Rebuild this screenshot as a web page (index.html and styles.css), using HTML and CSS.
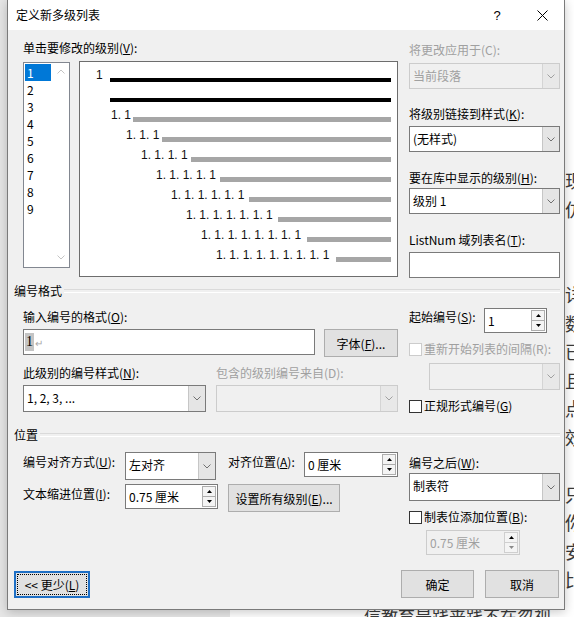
FILE: index.html
```html
<!DOCTYPE html>
<html lang="zh-CN">
<head>
<meta charset="utf-8">
<title>定义新多级列表</title>
<link rel="stylesheet" href="styles.css">
</head>
<body>
<div class="backdrop">
  <div class="gutter"></div>
  <div class="page">
    <div class="doc">
      <p>现</p>
      <p>仿</p>
      <p></p>
      <p></p>
      <p>详</p>
      <p>数</p>
      <p>已</p>
      <p>且</p>
      <p>点</p>
      <p>效</p>
      <p></p>
      <p>只</p>
      <p>你</p>
      <p>安</p>
      <p>比</p>
      <p class="last">信教育是践来践不在忽视。</p>
    </div>
  </div>
</div>

<div class="dialog">
  <div class="titlebar">
    <span class="title">定义新多级列表</span>
    <span class="tb-btn help">?</span>
    <span class="tb-btn close">
      <svg width="11" height="11" viewBox="0 0 11 11"><path d="M0.5 0.5 L10.5 10.5 M10.5 0.5 L0.5 10.5" stroke="#000" stroke-width="1" fill="none"/></svg>
    </span>
  </div>

  <div class="body">
    <div class="sec-top">
      <div class="levels-col">
        <div class="label">单击要修改的级别(<u>V</u>):</div>
        <div class="levels-row">
          <div class="level-list">
            <ul class="items">
              <li class="sel">1</li>
              <li>2</li>
              <li>3</li>
              <li>4</li>
              <li>5</li>
              <li>6</li>
              <li>7</li>
              <li>8</li>
              <li>9</li>
            </ul>
            <div class="vscroll">
              <svg width="8" height="5" viewBox="0 0 8 5"><polyline points="0.5,4.5 4,1 7.5,4.5" fill="none" stroke="#c4c4c4" stroke-width="1"/></svg>
              <svg width="8" height="5" viewBox="0 0 8 5"><polyline points="0.5,0.5 4,4 7.5,0.5" fill="none" stroke="#c4c4c4" stroke-width="1"/></svg>
            </div>
          </div>
          <div class="preview">
            <div class="prow lv1"><span class="num">1</span><span class="bar black"></span></div>
            <div class="prow cont"><span class="bar black"></span></div>
            <div class="prow lv2"><span class="num">1. 1</span><span class="bar"></span></div>
            <div class="prow lv3"><span class="num">1. 1. 1</span><span class="bar"></span></div>
            <div class="prow lv4"><span class="num">1. 1. 1. 1</span><span class="bar"></span></div>
            <div class="prow lv5"><span class="num">1. 1. 1. 1. 1</span><span class="bar"></span></div>
            <div class="prow lv6"><span class="num">1. 1. 1. 1. 1. 1</span><span class="bar"></span></div>
            <div class="prow lv7"><span class="num">1. 1. 1. 1. 1. 1. 1</span><span class="bar"></span></div>
            <div class="prow lv8"><span class="num">1. 1. 1. 1. 1. 1. 1. 1</span><span class="bar"></span></div>
            <div class="prow lv9"><span class="num">1. 1. 1. 1. 1. 1. 1. 1. 1</span><span class="bar"></span></div>
          </div>
        </div>
      </div>

      <div class="side side-top">
        <div class="label disabled l-apply">将更改应用于(C):</div>
        <div class="combo disabled c-apply"><span class="val">当前段落</span><span class="arrow"><svg width="8" height="5" viewBox="0 0 8 5"><polyline points="0.5,0.5 4,4 7.5,0.5" fill="none" stroke="#a0a0a0"/></svg></span></div>
        <div class="label l-link">将级别链接到样式(<u>K</u>):</div>
        <div class="combo c-link"><span class="val">(无样式)</span><span class="arrow"><svg width="8" height="5" viewBox="0 0 8 5"><polyline points="0.5,0.5 4,4 7.5,0.5" fill="none" stroke="#707070"/></svg></span></div>
        <div class="label l-gallery">要在库中显示的级别(<u>H</u>):</div>
        <div class="combo c-gallery"><span class="val">级别 1</span><span class="arrow"><svg width="8" height="5" viewBox="0 0 8 5"><polyline points="0.5,0.5 4,4 7.5,0.5" fill="none" stroke="#707070"/></svg></span></div>
        <div class="label l-listnum">ListNum 域列表名(<u>T</u>):</div>
        <div class="textbox t-listnum"></div>
      </div>
    </div>

    <div class="group-head gh-format"><span>编号格式</span></div>

    <div class="sec sec-b">
      <div class="main">
        <div class="label l-fmt">输入编号的格式(<u>O</u>):</div>
        <div class="row r-fmt">
          <div class="textbox t-fmt"><span class="sel-num">1</span><span class="ret">↵</span></div>
          <div class="btn b-font">字体(<u>F</u>)...</div>
        </div>
        <div class="row r-labels">
          <div class="label l-style">此级别的编号样式(<u>N</u>):</div>
          <div class="label disabled">包含的级别编号来自(D):</div>
        </div>
        <div class="row r-combos">
          <div class="combo c-style"><span class="val">1, 2, 3, ...</span><span class="arrow"><svg width="8" height="5" viewBox="0 0 8 5"><polyline points="0.5,0.5 4,4 7.5,0.5" fill="none" stroke="#707070"/></svg></span></div>
          <div class="combo disabled c-include"><span class="val"></span><span class="arrow"><svg width="8" height="5" viewBox="0 0 8 5"><polyline points="0.5,0.5 4,4 7.5,0.5" fill="none" stroke="#a0a0a0"/></svg></span></div>
        </div>
      </div>

      <div class="side side-b">
        <div class="row r-start">
          <div class="label l-start">起始编号(<u>S</u>):</div>
          <div class="spin s-start">
            <span class="val">1</span>
            <span class="arrows">
              <span class="sb"><svg width="5" height="3" viewBox="0 0 5 3"><polygon points="0,3 2.5,0 5,3" fill="#000"/></svg></span>
              <span class="sb"><svg width="5" height="3" viewBox="0 0 5 3"><polygon points="0,0 5,0 2.5,3" fill="#000"/></svg></span>
            </span>
          </div>
        </div>
        <div class="check disabled ck-restart"><span class="cb"></span><span>重新开始列表的间隔(R):</span></div>
        <div class="combo disabled c-restart"><span class="val"></span><span class="arrow"><svg width="8" height="5" viewBox="0 0 8 5"><polyline points="0.5,0.5 4,4 7.5,0.5" fill="none" stroke="#a0a0a0"/></svg></span></div>
        <div class="check ck-legal"><span class="cb"></span><span>正规形式编号(<u>G</u>)</span></div>
      </div>
    </div>

    <div class="group-head gh-pos"><span>位置</span></div>

    <div class="sec sec-c">
      <div class="main">
        <div class="row r-align">
          <div class="label l-w102">编号对齐方式(<u>U</u>):</div>
          <div class="combo c-align"><span class="val">左对齐</span><span class="arrow"><svg width="8" height="5" viewBox="0 0 8 5"><polyline points="0.5,0.5 4,4 7.5,0.5" fill="none" stroke="#707070"/></svg></span></div>
          <div class="label l-at">对齐位置(<u>A</u>):</div>
          <div class="spin s-at">
            <span class="val">0 厘米</span>
            <span class="arrows">
              <span class="sb"><svg width="5" height="3" viewBox="0 0 5 3"><polygon points="0,3 2.5,0 5,3" fill="#000"/></svg></span>
              <span class="sb"><svg width="5" height="3" viewBox="0 0 5 3"><polygon points="0,0 5,0 2.5,3" fill="#000"/></svg></span>
            </span>
          </div>
        </div>
        <div class="row r-indent">
          <div class="label l-w102">文本缩进位置(<u>I</u>):</div>
          <div class="spin s-indent">
            <span class="val">0.75 厘米</span>
            <span class="arrows">
              <span class="sb"><svg width="5" height="3" viewBox="0 0 5 3"><polygon points="0,3 2.5,0 5,3" fill="#000"/></svg></span>
              <span class="sb"><svg width="5" height="3" viewBox="0 0 5 3"><polygon points="0,0 5,0 2.5,3" fill="#000"/></svg></span>
            </span>
          </div>
          <div class="btn b-all">设置所有级别(<u>E</u>)...</div>
        </div>
      </div>

      <div class="side side-c">
        <div class="label l-after">编号之后(<u>W</u>):</div>
        <div class="combo c-after"><span class="val">制表符</span><span class="arrow"><svg width="8" height="5" viewBox="0 0 8 5"><polyline points="0.5,0.5 4,4 7.5,0.5" fill="none" stroke="#707070"/></svg></span></div>
        <div class="check ck-tab"><span class="cb"></span><span>制表位添加位置(<u>B</u>):</span></div>
        <div class="spin disabled s-tab">
          <span class="val">0.75 厘米</span>
          <span class="arrows">
            <span class="sb"><svg width="5" height="3" viewBox="0 0 5 3"><polygon points="0,3 2.5,0 5,3" fill="#000"/></svg></span>
            <span class="sb"><svg width="5" height="3" viewBox="0 0 5 3"><polygon points="0,0 5,0 2.5,3" fill="#8a8a8a"/></svg></span>
          </span>
        </div>
      </div>
    </div>

    <div class="footer">
      <div class="btn focus b-less"><span class="focus-rect">&lt;&lt; 更少(<u>L</u>)</span></div>
      <div class="spacer"></div>
      <div class="btn b-ok">确定</div>
      <div class="btn b-cancel">取消</div>
    </div>
  </div>
</div>
</body>
</html>
```

FILE: styles.css
```css
* { box-sizing: border-box; }
html, body { margin: 0; padding: 0; }
body {
  width: 574px;
  height: 617px;
  overflow: hidden;
  position: relative;
  font-family: "Noto Sans CJK SC", "Noto Sans", sans-serif;
  font-size: 12px;
  color: #000;
  background: #fff;
}
u { text-decoration: underline; text-underline-offset: 1px; }

/* background document */
.backdrop { display: grid; grid-template-columns: 230px 1fr; height: 617px; }
.gutter { background: #e6e6e6; }
.page { background: #fff; overflow: hidden; }
.doc {
  width: 353px;
  padding-top: 166px;
  font-size: 18px;
  line-height: 28.5px;
  color: #3a3a3a;
  text-align: right;
  white-space: nowrap;
}
.doc p { margin: 0; height: 28.5px; }
.doc .last { text-align: left; padding-left: 134px; font-size: 17px; margin-top: 8px; }

/* dialog window */
.dialog {
  position: absolute;
  left: 7px;
  top: 0;
  width: 558px;
  height: 610px;
  border: 1px solid #7a7a7a;
  border-top: none;
  background: #f0f0f0;
  box-shadow: 0 2px 10px rgba(0, 0, 0, 0.22);
  display: flex;
  flex-direction: column;
}
.titlebar {
  height: 30px;
  background: #fff;
  display: flex;
  align-items: center;
  flex: none;
}
.title { flex: 1; padding-left: 8px; line-height: 16px; }
.tb-btn { display: flex; align-items: center; justify-content: center; height: 30px; }
.help { width: 46px; font-size: 13px; font-family: "Liberation Sans", sans-serif; }
.close { width: 44px; }

.body { flex: 1; }

.label { line-height: 16px; height: 16px; white-space: nowrap; }
.disabled, .label.disabled { color: #a0a0a0; }

.row { display: flex; align-items: flex-start; }

/* top section */
.sec-top { display: flex; padding-left: 15px; }
.levels-col { width: 375px; }
.levels-col > .label { margin-top: 10px; }
.levels-row { display: flex; gap: 9px; margin-top: 5px; align-items: flex-start; }
.level-list {
  width: 47px;
  height: 206px;
  margin-top: 1px;
  border: 1px solid #828790;
  background: #fff;
  display: flex;
}
.items { list-style: none; margin: 0; padding: 1px 1px 0 1px; width: 28px; }
.items li { height: 17px; line-height: 17px; padding-left: 2px; }
.items li.sel { background: #0078d7; color: #fff; }
.vscroll {
  width: 17px;
  display: flex;
  flex-direction: column;
  justify-content: space-between;
  align-items: center;
  padding: 6px 0 7px;
}
.vscroll svg { display: block; }

.preview {
  width: 319px;
  height: 216px;
  border: 1px solid #6d6d6d;
  background: #fff;
  padding-right: 6px;
}
.prow { display: flex; align-items: flex-end; height: 20px; }
.prow .num {
  flex: none;
  font-family: "Liberation Sans", sans-serif;
  font-size: 12px;
  line-height: 14px;
  white-space: nowrap;
  color: #111;
}
.prow .bar { flex: 1; height: 5px; background: #a6a6a6; }
.prow .bar.black { height: 4px; background: #000; }
.lv1 { padding-left: 16px; }  .lv1 .num { width: 14px; }
.cont { padding-left: 30px; }
.lv2 { padding-left: 31px; }  .lv2 .num { width: 22px; }
.lv3 { padding-left: 46px; }  .lv3 .num { width: 36px; }
.lv4 { padding-left: 61px; }  .lv4 .num { width: 50px; }
.lv5 { padding-left: 76px; }  .lv5 .num { width: 64px; }
.lv6 { padding-left: 91px; }  .lv6 .num { width: 78px; }
.lv7 { padding-left: 106px; } .lv7 .num { width: 92px; }
.lv8 { padding-left: 121px; } .lv8 .num { width: 106px; }
.lv9 { padding-left: 136px; } .lv9 .num { width: 120px; }

.side { width: 151px; margin-left: 11px; display: flex; flex-direction: column; }
.l-apply { margin-top: 12px; }
.c-apply { margin-top: 5px; }
.l-link { margin-top: 17px; }
.c-link { margin-top: 4px; }
.l-gallery { margin-top: 18px; }
.c-gallery { margin-top: 2px; }
.l-listnum { margin-top: 18px; }
.t-listnum { margin-top: 4px; }

/* controls */
.combo {
  display: flex;
  height: 26px;
  border: 1px solid #7a7a7a;
  background: #fff;
  flex: none;
}
.combo .val { flex: 1; padding-left: 3px; line-height: 24px; white-space: nowrap; overflow: hidden; }
.combo .arrow {
  width: 17px;
  background: #e5e5e5;
  border-left: 1px solid #c6c6c6;
  display: flex;
  align-items: center;
  justify-content: center;
}
.combo.disabled { border-color: #cccccc; background: #f0f0f0; }
.combo.disabled .arrow { background: #e8e8e8; border-left-color: #d4d4d4; }

.textbox { height: 26px; border: 1px solid #7a7a7a; background: #fff; flex: none; }

.spin {
  display: flex;
  height: 25px;
  border: 1px solid #7a7a7a;
  background: #fff;
  flex: none;
}
.spin .val { flex: 1; padding-left: 3px; line-height: 23px; white-space: nowrap; }
.spin .arrows {
  width: 15px;
  display: flex;
  flex-direction: column;
  padding: 1px 1px 1px 0;
}
.spin .sb {
  flex: 1;
  border: 1px solid #adadad;
  background: #f4f4f4;
  display: flex;
  align-items: center;
  justify-content: center;
}
.spin .sb + .sb { border-top: none; }
.spin.disabled { border-color: #cccccc; background: #f0f0f0; }
.spin.disabled .sb { border-color: #cfcfcf; }

.btn {
  display: flex;
  align-items: center;
  justify-content: center;
  border: 1px solid #adadad;
  background: #e1e1e1;
  white-space: nowrap;
  flex: none;
}
.btn.focus { border: 2px solid #1e6fc5; padding: 1px; }
.focus-rect {
  flex: 1;
  align-self: stretch;
  border: 1px dotted #000;
  display: flex;
  align-items: center;
  justify-content: center;
}

.check { display: flex; align-items: center; height: 16px; line-height: 16px; white-space: nowrap; }
.check .cb {
  width: 13px;
  height: 13px;
  border: 1px solid #333;
  background: #fff;
  margin-right: 2px;
  flex: none;
}
.check.disabled .cb { border-color: #cccccc; }

/* group headers */
.group-head {
  display: flex;
  align-items: center;
  height: 16px;
  line-height: 16px;
  padding: 0 4px 0 6px;
}
.group-head::after {
  content: "";
  flex: 1;
  height: 2px;
  border-top: 1px solid #dadada;
  border-bottom: 1px solid #fff;
  margin-left: 2px;
}
.gh-format { margin-top: 5px; }
.gh-pos { margin-top: 13px; }

/* section B */
.sec { display: flex; padding-left: 15px; }
.main { width: 375px; }
.l-fmt { margin-top: 10px; }
.r-fmt { margin-top: 4px; gap: 9px; }
.t-fmt { width: 292px; display: flex; align-items: center; padding-left: 1px; }
.sel-num {
  font-family: "Liberation Serif", serif;
  font-size: 14px;
  line-height: 18px;
  background: #c4c4c4;
  padding: 0 1px;
}
.ret { color: #a8a8a8; font-size: 10px; margin-left: 1px; }
.b-font { width: 74px; height: 28px; }
.r-labels { margin-top: 8px; }
.l-style { width: 193px; }
.r-combos { margin-top: 4px; gap: 10px; }
.c-style { width: 183px; height: 27px; }
.c-include { width: 182px; height: 27px; }

.side-b .r-start { margin-top: 9px; }
.l-start { width: 75px; margin-top: 1px; }
.s-start { width: 63px; }
.ck-restart { margin-top: 8px; }
.c-restart { margin-top: 6px; margin-left: 20px; width: 131px; height: 27px; }
.ck-legal { margin-top: 8px; }

/* section C */
.r-align { margin-top: 9px; }
.l-w102 { width: 102px; margin-top: 2px; }
.c-align { width: 91px; height: 28px; }
.l-at { width: 76px; margin-left: 12px; margin-top: 2px; }
.s-at { width: 94px; }
.r-indent { margin-top: 4px; }
.s-indent { width: 93px; }
.b-all { width: 112px; height: 28px; margin-left: 10px; }

.l-after { margin-top: 12px; }
.c-after { margin-top: 2px; height: 28px; }
.ck-tab { margin-top: 8px; }
.s-tab { margin-top: 5px; margin-left: 17px; width: 94px; }

/* footer */
.footer {
  display: flex;
  align-items: flex-start;
  margin-top: 15px;
  padding: 0 5px 0 6px;
  gap: 11px;
}
.spacer { flex: 1; }
.b-less { width: 76px; height: 27px; margin-top: 1px; }
.b-ok { width: 73px; height: 28px; }
.b-cancel { width: 74px; height: 28px; }
```
